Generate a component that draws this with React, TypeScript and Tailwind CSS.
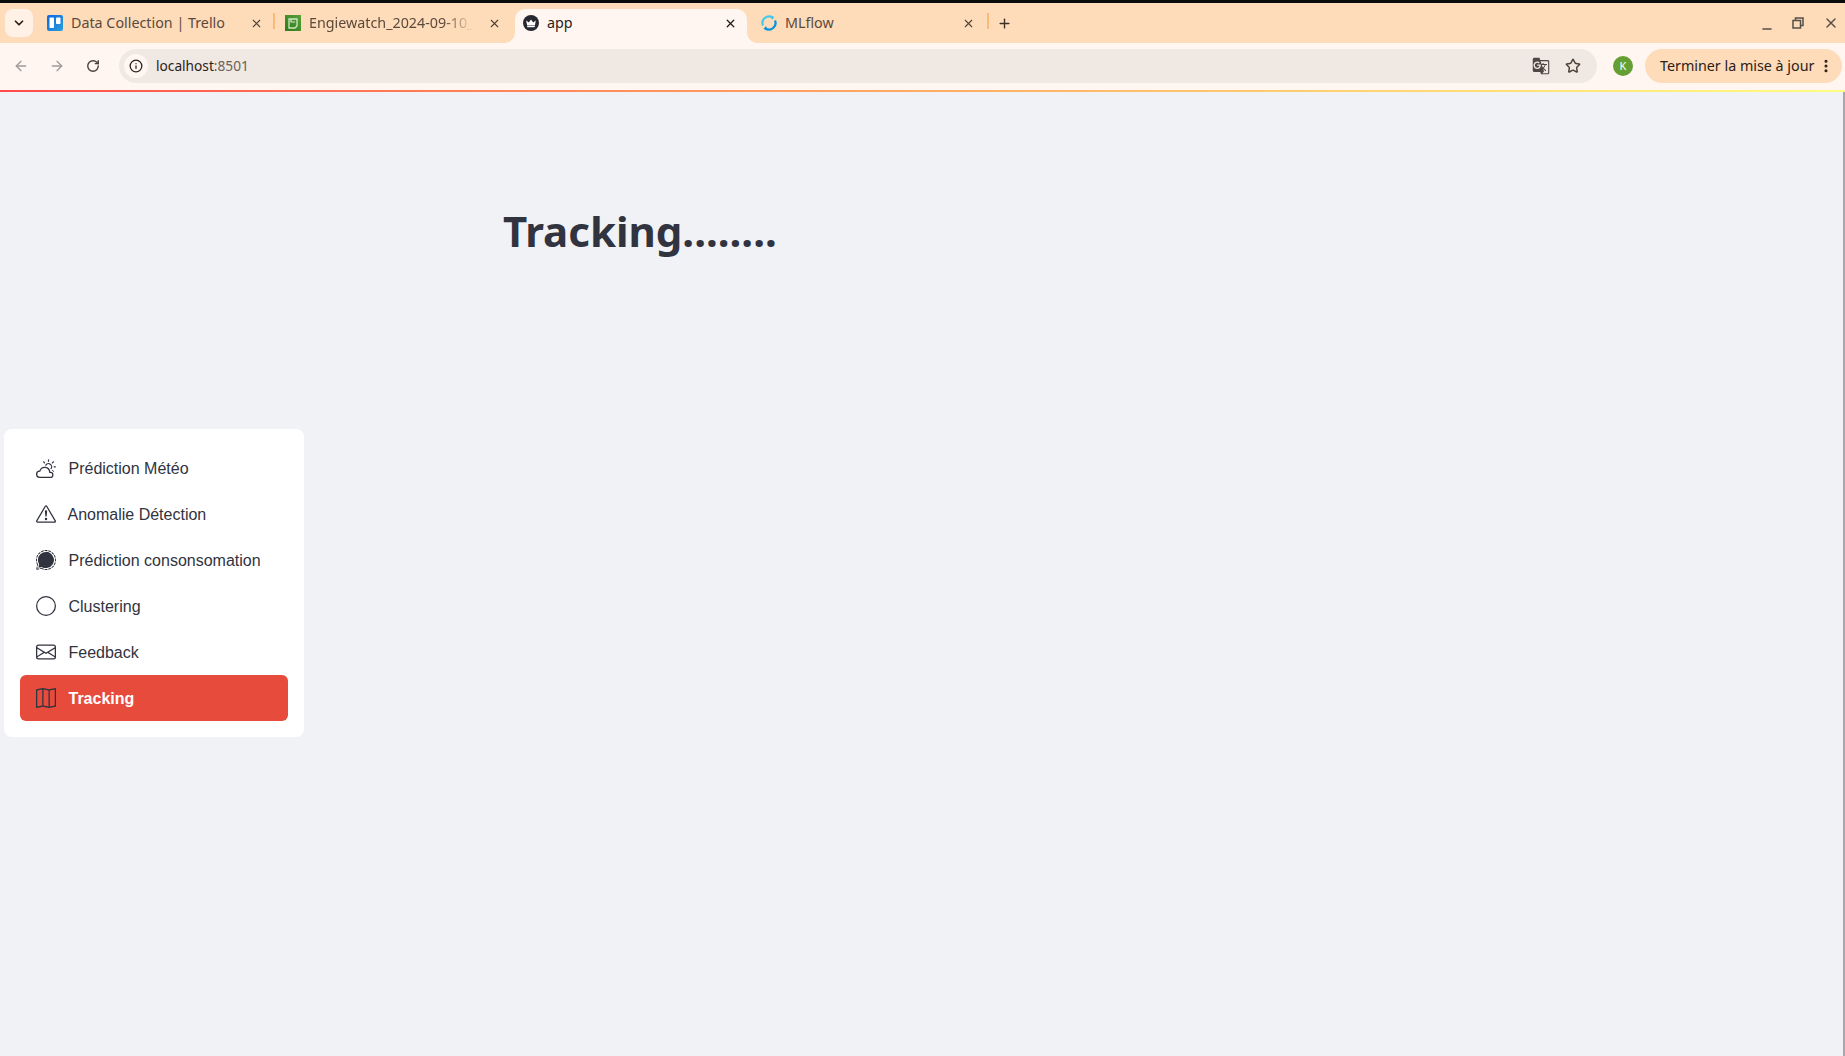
import { ArrowLeft, ArrowRight, RotateCw, ChevronDown, X, Plus, Star, Info, EllipsisVertical, Minus } from "lucide-react";
import { BsCloudSun, BsExclamationTriangle, BsSignal, BsCircle, BsEnvelope, BsMap } from "react-icons/bs";
import { MdGTranslate } from "react-icons/md";

const TrelloIcon = () => (
  <svg width="16" height="16" viewBox="0 0 16 16">
    <defs>
      <linearGradient id="trello" x1="0" y1="0" x2="1" y2="1">
        <stop offset="0" stopColor="#0c66e4" />
        <stop offset="1" stopColor="#2b9fd8" />
      </linearGradient>
    </defs>
    <rect width="16" height="16" rx="2" fill="url(#trello)" />
    <rect x="2.5" y="2.5" width="4.5" height="10.5" rx="0.8" fill="#fff" />
    <rect x="9" y="2.5" width="4.5" height="6.5" rx="0.8" fill="#fff" />
  </svg>
);

const SheetIcon = () => (
  <svg width="16" height="16" viewBox="0 0 16 16">
    <defs>
      <linearGradient id="sheet" x1="1" y1="0" x2="0" y2="1">
        <stop offset="0" stopColor="#5aa13a" />
        <stop offset="1" stopColor="#2c7a1e" />
      </linearGradient>
    </defs>
    <rect width="16" height="16" fill="url(#sheet)" />
    <path d="M4 4h8v7l-2 2H4z" fill="none" stroke="#cfe8c2" strokeWidth="1.3" />
    <path d="M6 4v3h4" fill="none" stroke="#cfe8c2" strokeWidth="1.2" />
  </svg>
);

const CrownIcon = () => (
  <svg width="16" height="16" viewBox="0 0 16 16">
    <circle cx="8" cy="8" r="8" fill="#262730" />
    <path d="M3.2 5.6l2.6 1.9L8 4.4l2.2 3.1 2.6-1.9-.9 4.9H4.1z" fill="#fff" />
    <rect x="4.2" y="11" width="7.6" height="1.2" fill="#fff" />
  </svg>
);

const MlflowIcon = () => (
  <svg width="16" height="16" viewBox="0 0 16 16" fill="none">
    <path d="M2 10.5A6.5 6.5 0 0 1 11.5 2.5" stroke="#43c9ed" strokeWidth="2.2" />
    <path d="M14 5.5A6.5 6.5 0 0 1 4.5 13.5" stroke="#0194e2" strokeWidth="2.2" />
    <path d="M9.5 0.5l4 1.5-2.5 3z" fill="#43c9ed" />
    <path d="M6.5 15.5l-4-1.5 2.5-3z" fill="#0194e2" />
  </svg>
);

const tabs = [
  { title: "Data Collection | Trello", icon: <TrelloIcon />, sep: true },
  { title: "Engiewatch_2024-09-10_", icon: <SheetIcon />, sep: false },
];

const Tab = ({ title, icon, sep }: { title: string; icon: React.ReactNode; sep: boolean }) => (
  <div className="w-[240px] h-[34px] flex items-center pl-[8px] pr-[16px] pb-[6px] relative">
    <div className="w-4 h-4 shrink-0">{icon}</div>
    <span className={`ml-2 text-[14.3px] text-[#5b4a3c] whitespace-nowrap ${sep ? "" : "[mask-image:linear-gradient(to_right,black_82%,transparent_100%)]"}`}>{title}</span>
    <X size={13} strokeWidth={2} className="ml-auto text-[#4f4338]" />
    {sep && <div className="absolute right-[4px] top-[4px] w-[2px] h-[16px] bg-[#f9bb76]" />}
  </div>
);

const menu = [
  { label: "Prédiction Météo", icon: BsCloudSun },
  { label: "Anomalie Détection", icon: BsExclamationTriangle, tight: true },
  { label: "Prédiction consonsomation", icon: BsSignal },
  { label: "Clustering", icon: BsCircle },
  { label: "Feedback", icon: BsEnvelope },
  { label: "Tracking", icon: BsMap, active: true },
];

export default function App() {
  return (
    <div className="h-screen overflow-hidden flex flex-col bg-[#f0f2f6] font-['Liberation_Sans',sans-serif]">
      {/* browser chrome */}
      <div className="h-[3px] bg-[#0b0b0b]" />
      <div className="h-[40px] bg-[#fedbb9] flex items-start pt-[6px] font-['Noto_Sans',sans-serif]">
        <div className="ml-[5px] w-[28px] h-[28px] rounded-[8px] bg-[#fff1e6] flex items-center justify-center">
          <ChevronDown size={14} strokeWidth={3} className="text-[#2b2118]" />
        </div>
        <div className="ml-[6px] flex">
          {tabs.map((t) => (
            <div key={t.title} className="mr-[-2px] last:mr-0">
              <Tab {...t} />
            </div>
          ))}
        </div>
        <div className="relative ml-[-2px] w-[232px] h-[34px] bg-[#fff6f1] rounded-t-[10px] flex items-center pl-[8px] pr-[10px] pb-[6px]">
          <div className="absolute left-[-10px] bottom-0 w-[10px] h-[10px] bg-[radial-gradient(circle_at_0_0,#fedbb9_9.5px,#fff6f1_10px)]" />
          <div className="absolute right-[-10px] bottom-0 w-[10px] h-[10px] bg-[radial-gradient(circle_at_100%_0,#fedbb9_9.5px,#fff6f1_10px)]" />
          <CrownIcon />
          <span className="ml-2 text-[14.3px] text-[#2b2118]">app</span>
          <X size={13} strokeWidth={2.4} className="ml-auto text-[#1f1a16]" />
        </div>
        <div className="relative w-[242px] h-[34px] flex items-center pl-[14px] pr-[14px] pb-[6px]">
          <MlflowIcon />
          <span className="ml-2 text-[14.3px] text-[#5b4a3c]">MLflow</span>
          <X size={13} strokeWidth={2} className="ml-auto text-[#4f4338]" />
          <div className="absolute right-[0px] top-[4px] w-[2px] h-[16px] bg-[#f9bb76]" />
        </div>
        <Plus size={15} strokeWidth={2.2} className="ml-[8px] mt-[7px] text-[#3a3028]" />
        <div className="ml-auto flex items-center h-[28px] mr-[6px] text-[#55504a]">
          <Minus size={14} strokeWidth={2.4} className="mt-[12px]" />
          <svg width="12" height="12" viewBox="0 0 12 12" fill="none" stroke="currentColor" strokeWidth="1.5" className="ml-[18px]">
            <path d="M3.5 3V1h7.5v7.5H9" />
            <rect x="1" y="3.5" width="7.5" height="7.5" />
          </svg>
          <X size={16} strokeWidth={2.2} className="ml-[19px]" />
        </div>
      </div>
      <div className="h-[47px] bg-[#fff6f1] flex items-center pb-[1px] font-['Noto_Sans',sans-serif]">
        <ArrowLeft size={16} strokeWidth={2} className="ml-[13px] text-[#a09a96]" />
        <ArrowRight size={16} strokeWidth={2} className="ml-[20px] text-[#a09a96]" />
        <RotateCw size={14} strokeWidth={2.4} className="ml-[21px] text-[#4a3f36]" />
        <div className="ml-[19px] w-[1478px] h-[34px] rounded-full bg-[#f0e8e3] flex items-center pl-[5px] pr-[16px]">
          <div className="w-[24px] h-[24px] rounded-full bg-[#fff6f1] flex items-center justify-center">
            <Info size={14} strokeWidth={2.2} className="text-[#2b2118]" />
          </div>
          <span className="ml-[8px] text-[13.7px] text-[#2b2118]">
            localhost<span className="text-[#6a5f56]">:8501</span>
          </span>
          <MdGTranslate size={18} className="ml-auto text-[#4f4844]" />
          <Star size={16} strokeWidth={2.2} className="ml-[15px] text-[#4f4338]" />
        </div>
        <div className="ml-[16px] w-[20px] h-[20px] rounded-full bg-[#659f33] flex items-center justify-center text-[11px] text-white">K</div>
        <div className="ml-[12px] w-[197px] h-[34px] rounded-full bg-[#fedbb9] flex items-center pl-[15px] pr-[8px]">
          <span className="text-[14.3px] leading-[20px] -mt-[1px] text-[#2b2118] whitespace-nowrap">Terminer la mise à jour</span>
          <EllipsisVertical size={16} strokeWidth={2.6} className="ml-auto text-[#2b2118]" />
        </div>
      </div>
      <div className="h-[2px] bg-gradient-to-r from-[#ff4b4b] to-[#fffd80]" />

      {/* page */}
      <div className="flex-1 flex min-h-0">
        <div className="flex-1">
          <h1 className="ml-[503px] mt-[111px] text-[42px] leading-[56px] font-bold text-[#31333f] font-['Noto_Sans',sans-serif]">Tracking........</h1>
          <div className="ml-[4px] mt-[170px] w-[300px] bg-white rounded-[8px] p-4">
            {menu.map((m) => (
              <div
                key={m.label}
                className={`h-[46px] flex items-center pl-[16px] rounded-[6px] text-[16px] ${m.active ? "bg-[#e74b3c] text-white font-bold" : "text-[#31333f]"}`}
              >
                <m.icon size={20} className="text-[#31333f] shrink-0 -mt-[1px]" />
                <span className={`mt-[2px] ${m.tight ? "ml-[11.5px]" : "ml-[12.5px]"}`}>{m.label}</span>
              </div>
            ))}
          </div>
        </div>
        <div className="w-[2px] bg-[#a8a8ac]" />
      </div>
    </div>
  );
}
